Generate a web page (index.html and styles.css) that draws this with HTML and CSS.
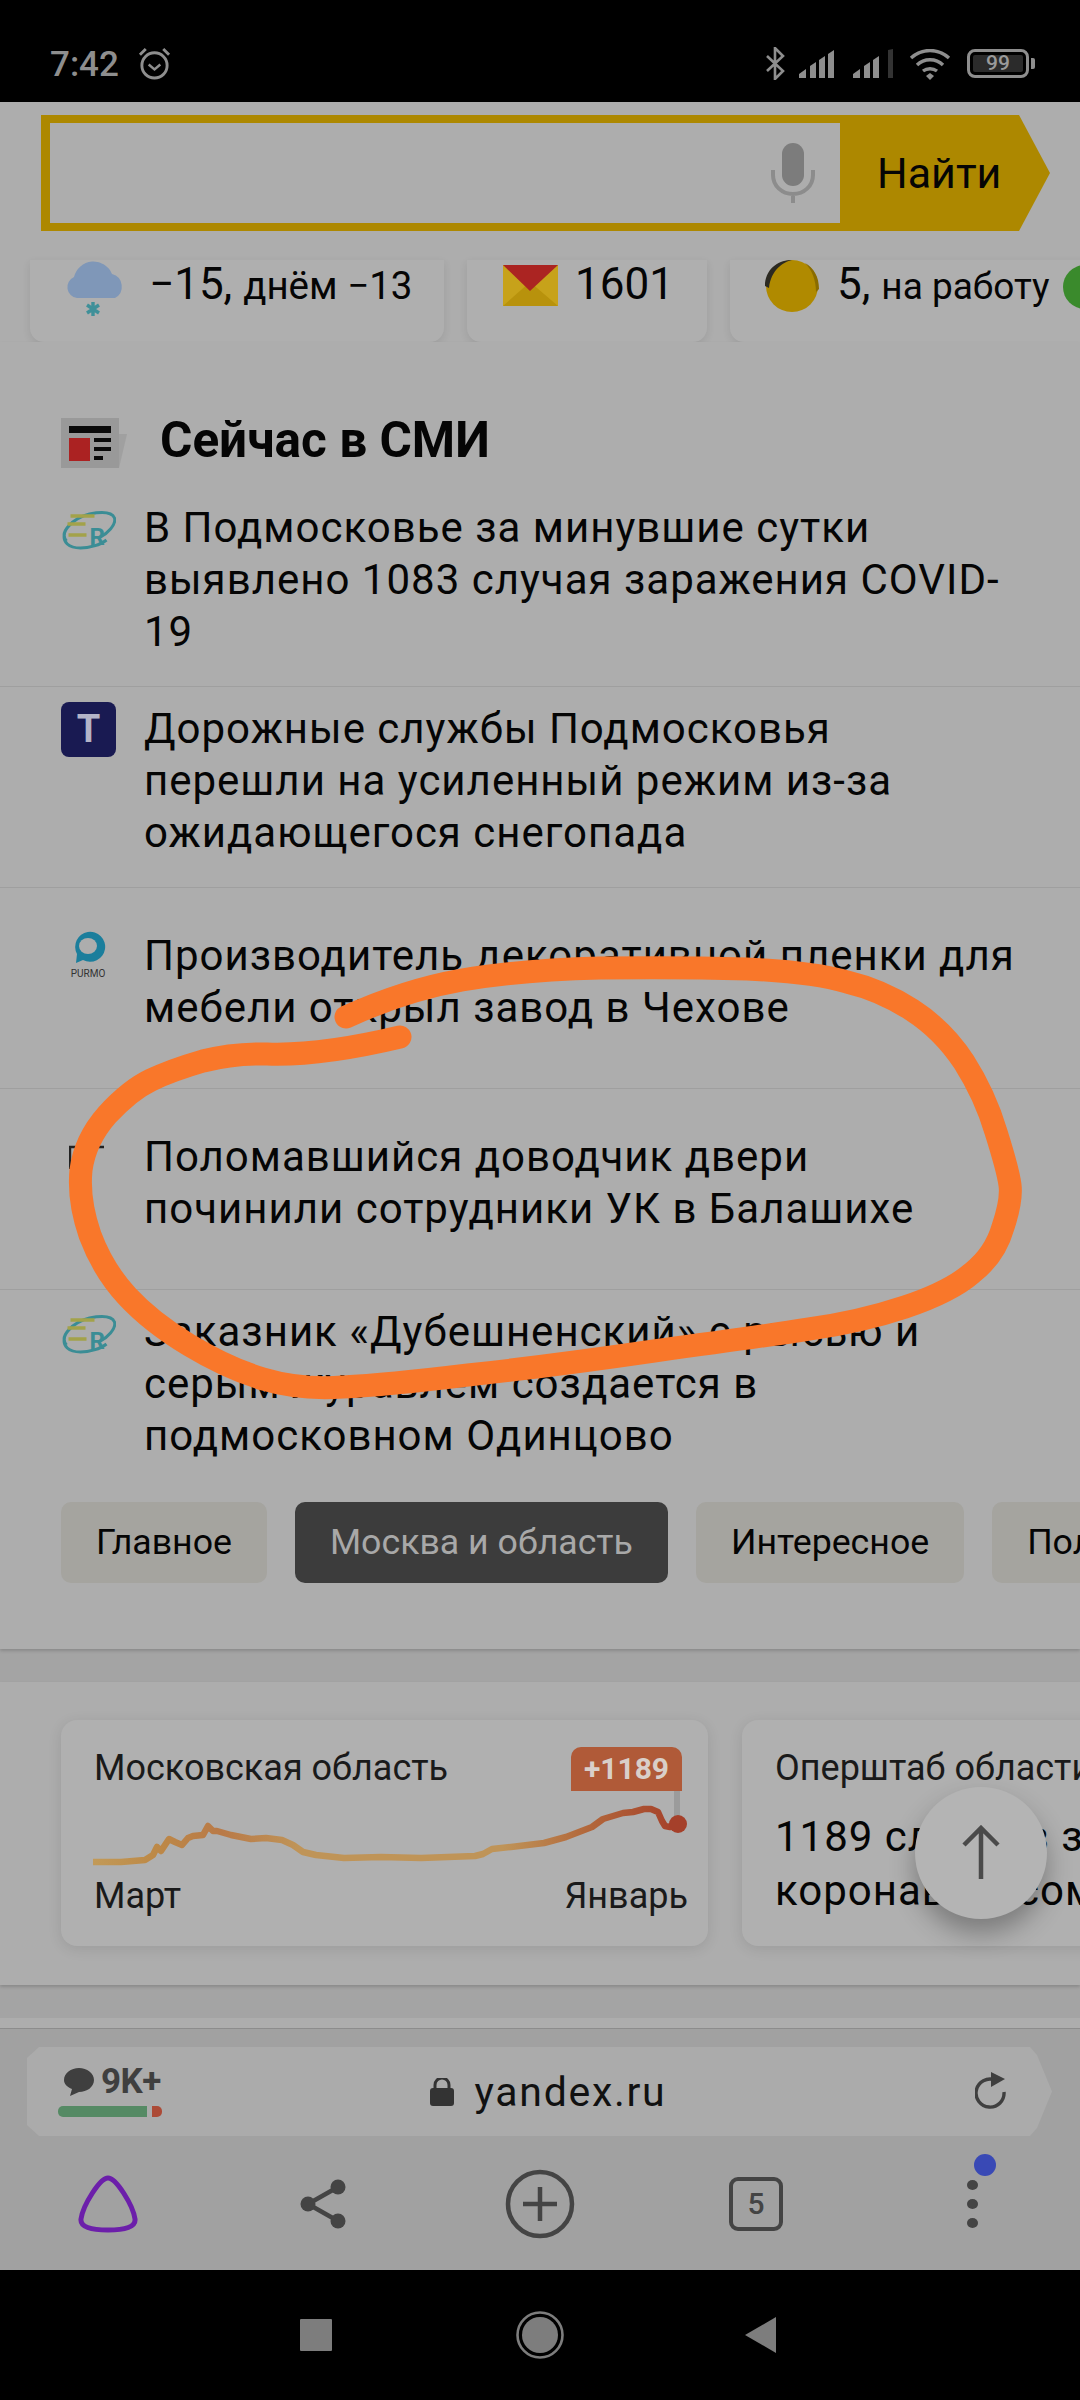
FILE: index.html
```html
<!DOCTYPE html>
<html lang="ru">
<head>
<meta charset="utf-8">
<title>Яндекс</title>
<link rel="stylesheet" href="styles.css">
</head>
<body>
<div class="screen">
  <header class="status">
    <div class="status-left">
      <span class="clock">7:42</span>
      <svg class="ic-alarm" viewBox="0 0 34 34"><circle cx="17" cy="19" r="13" fill="none" stroke="#8e8e8e" stroke-width="3"/><path d="M11 18l6 5 6-5" fill="none" stroke="#8e8e8e" stroke-width="2.5"/><path d="M2 8l6-6M32 8l-6-6" stroke="#8e8e8e" stroke-width="3"/></svg>
    </div>
    <div class="status-right">
      <svg class="ic-bt" viewBox="0 0 20 33"><path d="M2 9l16 15-8 8V1l8 8L2 24" fill="none" stroke="#8e8e8e" stroke-width="2.6"/></svg>
      <svg class="ic-sig" viewBox="0 0 40 29"><path d="M0 29v-4l7-5v9zM11 29V17l6-4v16zM20 29V11l6-4v22zM29 29V5l6-4v28z" fill="#8e8e8e"/></svg>
      <svg class="ic-sig sig2" viewBox="0 0 40 29"><path d="M0 29v-4l7-5v9zM11 29V17l6-4v16zM20 29V11l6-4v22z" fill="#8e8e8e"/><path d="M35 29V1l5-1v29z" fill="#333"/></svg>
      <svg class="ic-wifi" viewBox="0 0 42 32"><path d="M2 9c11-10 27-10 38 0M8 16c7-7 19-7 26 0M14 22c4-3 10-3 14 0" fill="none" stroke="#8e8e8e" stroke-width="3.4"/><path d="M17 27l4-3 4 3-4 4z" fill="#8e8e8e"/></svg>
      <div class="battery"><span class="batt-body"><span class="batt-num">99</span></span><span class="batt-nub"></span></div>
    </div>
  </header>

  <main class="page">
    <div class="top">
      <div class="search">
        <div class="search-field">
          <svg class="ic-mic" viewBox="0 0 44 60"><rect x="11" y="0" width="22" height="43" rx="11" fill="#7c7c7c"/><path d="M2 27v5c0 11 9 19 20 19s20-8 20-19v-5M22 51v9" fill="none" stroke="#8c8c8c" stroke-width="4"/></svg>
        </div>
        <div class="search-btn">Найти</div>
      </div>

      <div class="informers">
        <div class="informer inf-weather">
          <svg class="ic-weather" viewBox="0 0 62 58"><path d="M12 38a11 11 0 0 1-3-21 20 20 0 0 1 38-3 13 13 0 0 1 3 24z" fill="#7f97b8"/><path d="M28 42v14M22 45l12 8M34 45l-12 8" stroke="#3f9099" stroke-width="3.4"/></svg>
          <span>−15, <span class="small">днём −13</span></span>
        </div>
        <div class="informer inf-mail">
          <svg class="ic-mail" viewBox="0 0 55 41"><path d="M0 0h55v41H0z" fill="#c7a21a"/><path d="M0 41l27-24 28 24z" fill="#b8920c"/><path d="M0 0h55L27 26z" fill="#ab2422"/></svg>
          <span>1601</span>
        </div>
        <div class="informer inf-traffic">
          <svg class="ic-coin" viewBox="0 0 58 52"><ellipse cx="29" cy="26" rx="26" ry="26" fill="#b08a00"/><path d="M2 26C2 10 14 0 29 0 20 2 8 10 6 28z" fill="#2c2a22"/><path d="M42 3c9 5 14 14 14 26l-3 3C53 20 49 10 42 3z" fill="#8a6c00"/></svg>
          <span>5, <span class="small tight">на работу</span></span>
          <span class="green-dot"></span>
        </div>
      </div>
    </div>

    <section class="news">
      <h2 class="news-head">
        <svg class="ic-news" viewBox="0 0 66 50"><path d="M0 0h58v50H0z" fill="#999"/><path d="M58 16h8l-8 34z" fill="#a0a0a0"/><path d="M8 8h42v7H8z" fill="#0a0a0a"/><path d="M8 20h21v23H8z" fill="#ab2222"/><path d="M33 20h17v4H33zM33 29h17v4H33zM33 38h9v4h-9z" fill="#0a0a0a"/></svg>
        <span class="news-title">Сейчас в СМИ</span>
      </h2>

      <article class="item">
        <svg class="src src-er" viewBox="0 0 54 40"><path d="M5 31C-3 22 12 8 28 4 38 2 50 1 53 8c2 7-8 16-14 19M3 24c-2 8 4 14 16 14 8 0 20-3 26-8" fill="none" stroke="#3b8d95" stroke-width="3"/><path d="M9 6h24M6 14h18M7 25h18" stroke="#a3a24a" stroke-width="3.6"/><text x="28" y="35" class="er-r">R</text></svg>
        <p>В Подмосковье за минувшие сутки выявлено 1083 случая заражения COVID-19</p>
      </article>
      <article class="item">
        <div class="src src-t"><span>Т</span></div>
        <p>Дорожные службы Подмосковья перешли на усиленный режим из-за ожидающегося снегопада</p>
      </article>
      <article class="item item-mid">
        <div class="src-purmo">
          <svg class="purmo-ring" viewBox="0 0 38 38"><path d="M7 34l1-9a15 15 0 1 1 6 6z" fill="#1b7e9c"/><ellipse cx="19" cy="17" rx="9" ry="8" fill="#adadad"/></svg>
          <span class="purmo-name">PURMO</span>
        </div>
        <p>Производитель декоративной пленки для мебели открыл завод в Чехове</p>
      </article>
      <article class="item item-mid">
        <svg class="src src-pg" viewBox="0 0 36 26"><path d="M1 24V2h14M15 2v22M21 2h14M21 2v22" fill="none" stroke="#222" stroke-width="2.4"/></svg>
        <p>Поломавшийся доводчик двери починили сотрудники УК в Балашихе</p>
      </article>
      <article class="item item-last">
        <svg class="src src-er" viewBox="0 0 54 40"><path d="M5 31C-3 22 12 8 28 4 38 2 50 1 53 8c2 7-8 16-14 19M3 24c-2 8 4 14 16 14 8 0 20-3 26-8" fill="none" stroke="#3b8d95" stroke-width="3"/><path d="M9 6h24M6 14h18M7 25h18" stroke="#a3a24a" stroke-width="3.6"/><text x="28" y="35" class="er-r">R</text></svg>
        <p>Заказник «Дубешненский» с рысью и серым журавлем создается в подмосковном Одинцово</p>
      </article>

      <nav class="tabs">
        <span class="tab">Главное</span>
        <span class="tab tab-on">Москва и область</span>
        <span class="tab">Интересное</span>
        <span class="tab">Политика</span>
      </nav>
    </section>

    <section class="covid">
      <div class="ccard">
        <div class="ccard-top">
          <span>Московская область</span>
          <span class="badge">+1189</span>
        </div>
        <svg class="chart" viewBox="0 0 647 90">
          <defs><linearGradient id="lg" x1="0" x2="1" y1="0" y2="0"><stop offset="0" stop-color="#c29a58"/><stop offset=".1" stop-color="#bd8a48"/><stop offset=".22" stop-color="#b97a48"/><stop offset=".35" stop-color="#bf9458"/><stop offset=".7" stop-color="#bf9458"/><stop offset=".85" stop-color="#b2663a"/><stop offset="1" stop-color="#a5402a"/></linearGradient></defs>
          <path d="M616 0v33" stroke="#9b9b9b" stroke-width="6"/>
          <path d="M32 71L60 71 84 69 92 64 96 56 100 60 108 48 114 51 121 54 127 47 132 45 142 44 147 35 152 40 156 40 170 44 190 48 205 47 221 49 232 54 242 61 255 64 283 67 320 66 360 67 414 65 422 63 431 58 450 56 483 52 505 46 531 36 542 28 552 25 562 22 572 21 583 18 590 18 597 21 601 30 604 35 609 36 613 34 617 33" fill="none" stroke="url(#lg)" stroke-width="6.5" stroke-linejoin="round"/>
          <circle cx="617" cy="33" r="9" fill="#a5402a"/>
        </svg>
        <div class="ccard-bottom"><span>Март</span><span>Январь</span></div>
      </div>
      <div class="ccard ccard2">
        <div class="ccard-top">Оперштаб области</div>
        <p class="ccard-text">1189 случаев заражения<br>коронавирусом</p>
      </div>
    </section>
    <div class="peek"></div>
  </main>

  <footer class="browser">
    <div class="urlbar">
      <div class="comments">
        <div class="comments-top">
          <svg class="ic-bubble" viewBox="0 0 30 28"><path d="M15 0c8 0 15 5 15 12s-7 12-15 12l-9 4 2-7C3 19 0 16 0 12 0 5 7 0 15 0z" fill="#3f3f3f"/></svg>
          <span>9K+</span>
        </div>
        <div class="meter"><span class="meter-g"></span><span class="meter-r"></span></div>
      </div>
      <div class="address">
        <svg class="ic-lock" viewBox="0 0 24 28"><path d="M5 12V7a7 7 0 0 1 14 0v5" fill="none" stroke="#333" stroke-width="3"/><rect x="0" y="10" width="24" height="18" rx="3" fill="#333"/></svg>
        <span>yandex.ru</span>
      </div>
      <svg class="ic-reload" viewBox="0 0 32 40"><path d="M20 8A14 14 0 1 0 29 20" fill="none" stroke="#3f3f3f" stroke-width="3.4"/><path d="M16 0l14 7-14 8z" fill="#3f3f3f"/></svg>
    </div>
    <div class="toolbar">
      <svg class="tb tb-alice" viewBox="0 0 61 58"><path d="M30 3C22 3 5 30 3 44c-1 8 10 11 27 11s28-3 27-11C55 30 38 3 30 3z" fill="none" stroke="#6c1faa" stroke-width="5"/></svg>
      <svg class="tb tb-share" viewBox="0 0 46 50"><path d="M38 8L8 25l30 17" fill="none" stroke="#444" stroke-width="4.5"/><circle cx="38" cy="8" r="7.5" fill="#444"/><circle cx="8" cy="25" r="7.5" fill="#444"/><circle cx="38" cy="42" r="7.5" fill="#444"/></svg>
      <svg class="tb tb-plus" viewBox="0 0 70 70"><circle cx="35" cy="35" r="32" fill="none" stroke="#444" stroke-width="4.5"/><path d="M18 35h34M35 18v34" stroke="#444" stroke-width="4.5"/></svg>
      <div class="tb-tabs">5</div>
      <div class="tb-more">
        <i></i><i></i><i></i>
        <span class="more-dot"></span>
      </div>
    </div>
  </footer>

  <div class="navbar">
    <svg class="nav-sq" viewBox="0 0 32 32"><rect width="32" height="32" rx="1" fill="#7d7d7d"/></svg>
    <svg class="nav-ci" viewBox="0 0 48 48"><circle cx="24" cy="24" r="22.5" fill="none" stroke="#7d7d7d" stroke-width="2.6"/><circle cx="24" cy="24" r="18" fill="#7d7d7d"/></svg>
    <svg class="nav-bk" viewBox="0 0 31 36"><path d="M31 0v36L0 18z" fill="#7d7d7d"/></svg>
  </div>

  <button class="fab" type="button">
    <svg viewBox="0 0 40 56"><path d="M20 54V4M3 20L20 3l17 17" fill="none" stroke="#4a4a4a" stroke-width="4.5"/></svg>
  </button>

  <svg class="scribble" viewBox="0 0 1080 2400">
    <path d="M346 1017Q405 990 462 980Q520 970 600 968Q680 967 747 969Q813 972 847 982Q881 990 912 1010Q943 1030 964 1062Q985 1095 996 1132Q1008 1170 1010 1185Q1012 1200 1003 1227Q995 1255 972 1273Q950 1292 905 1307Q860 1322 809 1329Q758 1337 654 1351Q551 1366 468 1375Q386 1385 343 1387Q300 1390 263 1379Q227 1368 189 1345Q151 1322 127 1296Q103 1270 90 1235Q78 1200 81 1170Q85 1140 107 1115Q130 1090 151 1080Q172 1070 203 1061Q234 1053 267 1054Q320 1056 400 1037" fill="none" stroke="#f9772a" stroke-width="23" stroke-linecap="round" stroke-linejoin="round"/>
  </svg>
</div>
</body>
</html>
```
FILE: styles.css
```css
* { box-sizing: border-box; margin: 0; padding: 0; }
html, body { background: #000; }
body { font-family: Roboto, "Noto Sans", sans-serif; color: #050505; }

.screen {
  position: relative;
  width: 1080px;
  height: 2400px;
  overflow: hidden;
  display: flex;
  flex-direction: column;
  background: #adadad;
}

/* status bar */
.status {
  height: 102px;
  flex: none;
  background: #000;
  display: flex;
  justify-content: space-between;
  padding: 47px 45px 0 50px;
  color: #8e8e8e;
}
.status-left { display: flex; align-items: flex-start; gap: 19px; }
.clock { font-size: 35px; font-weight: 500; line-height: 36px; }
.ic-alarm { width: 33px; height: 33px; }
.status-right { display: flex; align-items: flex-start; }
.ic-bt { width: 20px; height: 33px; }
.ic-sig { width: 40px; height: 29px; margin: 2px 0 0 14px; }
.sig2 { margin-left: 14px; }
.ic-wifi { width: 42px; height: 32px; margin: 2px 0 0 16px; }
.battery { display: flex; align-items: center; margin: 2px 0 0 16px; height: 29px; gap: 2px; }
.batt-body {
  width: 62px; height: 29px;
  border: 3px solid #8e8e8e;
  border-radius: 8px;
  padding: 3px;
  display: block;
}
.batt-num {
  display: block;
  height: 17px;
  background: #2b2b2b;
  border-radius: 2px;
  color: #9a9a9a;
  font-size: 21px;
  font-weight: 500;
  line-height: 17px;
  text-align: center;
}
.batt-nub { width: 4px; height: 11px; background: #8e8e8e; border-radius: 0 2px 2px 0; }

/* page */
.page { flex: 1; min-height: 0; display: flex; flex-direction: column; overflow: hidden; background: #a4a4a4; }
.top { flex: none; background: #adadad; padding-top: 13px; }

.search {
  height: 116px;
  margin-left: 41px;
  width: 1009px;
  display: flex;
  background: #ad8800;
  clip-path: polygon(0 0, 978px 0, 100% 50%, 978px 100%, 0 100%);
  padding: 8px 0 8px 9px;
}
.search-field {
  width: 790px;
  background: #adadad;
  display: flex;
  align-items: center;
  justify-content: flex-end;
  padding-right: 25px;
}
.ic-mic { width: 44px; height: 60px; }
.search-btn {
  flex: 1;
  padding-left: 37px;
  font-size: 43px;
  line-height: 100px;
  color: #050505;
}

.informers {
  height: 82px;
  margin-top: 29px;
  padding-left: 30px;
  display: flex;
  gap: 23px;
}
.informer {
  flex: none;
  background: #afafaf;
  border-radius: 0 0 14px 14px;
  box-shadow: 0 3px 8px rgba(0,0,0,.09);
  display: flex;
  align-items: flex-start;
  font-size: 44px;
  line-height: 48px;
  white-space: nowrap;
}
.informer .small { font-size: 38.5px; }
.informer .tight { font-size: 37px; }
.inf-weather { width: 414px; padding-left: 35px; gap: 22px; }
.inf-mail { width: 240px; padding: 0 0 0 36px; gap: 17px; }
.inf-traffic { width: 500px; padding-left: 33px; gap: 16px; }
.ic-weather { width: 62px; height: 58px; }
.ic-mail { width: 55px; height: 41px; margin-top: 5px; }
.ic-coin { width: 58px; height: 52px; }
.green-dot { width: 44px; height: 44px; border-radius: 50%; background: #3a8a2c; margin: 5px 0 0 -3px; }

/* news */
.news {
  flex: none;
  height: 1307px;
  padding-top: 76px;
  background: #adadad;
  box-shadow: 0 2px 3px rgba(0,0,0,.16);
}
.news-head {
  display: flex;
  align-items: center;
  height: 50px;
  margin-bottom: 18px;
  padding-left: 61px;
  font-size: 49.5px;
  font-weight: 700;
  line-height: 50px;
}
.news-title { padding-bottom: 6px; }
.ic-news { width: 66px; height: 50px; margin-right: 33px; }

.item {
  height: 201px;
  padding: 16px 61px 0 144px;
  position: relative;
  border-bottom: 1px solid #9f9f9f;
  font-size: 42px;
  line-height: 52px;
}
.item-mid { padding-top: 42px; }
.item-last { border-bottom: 0; height: 212px; }
.item p { letter-spacing: 1px; }
.src { position: absolute; left: 61px; }
.src-er { top: 24px; width: 55px; height: 40px; }
.er-r { font: 700 24px Roboto, sans-serif; fill: #3b8d95; }
.src-t {
  top: 15px; width: 55px; height: 55px;
  background: #191a52;
  border-radius: 8px;
  color: #b4b4c8;
  font-size: 38px;
  font-weight: 700;
  line-height: 55px;
  text-align: center;
}
.src-purmo {
  position: absolute;
  left: 61px; top: 40px;
  width: 54px;
  display: flex;
  flex-direction: column;
  align-items: center;
}
.purmo-ring { width: 38px; height: 40px; }
.purmo-name { font-size: 10px; line-height: 12px; color: #333; }
.src-pg { left: 69px; top: 56px; width: 36px; height: 26px; }

.tabs {
  display: flex;
  gap: 28px;
  padding-left: 61px;
  white-space: nowrap;
}
.tab {
  flex: none;
  height: 81px;
  padding: 0 35px;
  border-radius: 10px;
  background: #a5a49f;
  font-size: 35.7px;
  line-height: 81px;
}
.tab-on { background: #3c3c3c; color: #a8a8a8; }

/* covid cards */
.covid {
  flex: none;
  height: 303px;
  margin-top: 33px;
  padding: 38px 0 0 61px;
  display: flex;
  gap: 34px;
  background: #adadad;
  box-shadow: 0 2px 3px rgba(0,0,0,.16);
}
.ccard {
  flex: none;
  width: 647px;
  height: 226px;
  background: #b0b0b0;
  border-radius: 16px;
  box-shadow: 0 3px 14px rgba(0,0,0,.1);
  padding: 26px 0 0 33px;
  position: relative;
  font-size: 36px;
  color: #1a1a1a;
}
.ccard-top { display: flex; justify-content: space-between; line-height: 44px; padding-right: 26px; white-space: nowrap; }
.badge {
  width: 111px;
  height: 44px;
  margin-top: 1px;
  background: #b05a38;
  border-radius: 10px 10px 0 0;
  color: #d9cfc9;
  font-weight: 700;
  font-size: 30px;
  line-height: 44px;
  text-align: center;
}
.chart { position: absolute; left: 0; top: 71px; width: 647px; height: 90px; }
.ccard-bottom { position: absolute; left: 33px; right: 20px; top: 154px; display: flex; justify-content: space-between; line-height: 44px; }
.ccard2 { width: 640px; }
.ccard-text { font-size: 42px; line-height: 54px; letter-spacing: 1px; white-space: nowrap; margin-top: 20px; color: #050505; }

.peek { flex: none; height: 12px; margin-top: 33px; background: #adadad; }

/* browser bars */
.browser {
  flex: none;
  height: 242px;
  background: #a1a1a1;
  border-top: 1px solid #8c8c8c;
  padding-top: 18px;
}
.urlbar {
  width: 1025px;
  height: 89px;
  margin-left: 27px;
  background: #ababab;
  clip-path: polygon(12px 0, 1003px 0, 1010px 8px, 100% 50%, 1010px 81px, 1003px 100%, 12px 100%, 0 78px, 0 11px);
  display: flex;
  align-items: center;
  padding: 0 45px 0 37px;
}
.comments { width: 102px; }
.comments-top { display: flex; gap: 7px; align-items: center; font-size: 35px; font-weight: 700; color: #3f3f3f; line-height: 30px; letter-spacing: -.5px; }
.ic-bubble { width: 30px; height: 28px; }
.meter { display: flex; gap: 5px; margin-top: 9px; height: 11px; margin-left: -6px; }
.meter-g { width: 89px; background: #558a64; border-radius: 5px 0 0 5px; }
.meter-r { width: 10px; background: #ac4a36; border-radius: 0 5px 5px 0; }
.address {
  flex: 1;
  display: flex;
  align-items: center;
  justify-content: center;
  gap: 21px;
  font-size: 41px;
  line-height: 50px;
  letter-spacing: 1.7px;
  color: #111;
  padding-right: 45px;
}
.ic-lock { width: 24px; height: 28px; }
.ic-reload { width: 32px; height: 40px; }

.toolbar {
  height: 109px;
  margin-top: 13px;
  padding: 0 88px 0 78px;
  display: flex;
  align-items: center;
}
.tb { flex: none; }
.tb-alice { width: 61px; height: 58px; }
.tb-share { width: 46px; height: 50px; margin-left: 161px; }
.tb-plus { width: 70px; height: 70px; margin-left: 159px; }
.tb-tabs {
  width: 54px; height: 54px;
  margin-left: 154px;
  border: 4.5px solid #444;
  border-radius: 9px;
  color: #444;
  font-size: 30px;
  font-weight: 500;
  line-height: 45px;
  text-align: center;
}
.tb-more { width: 11px; margin-left: 184px; display: flex; flex-direction: column; gap: 9px; position: relative; }
.tb-more i { display: block; width: 11px; height: 10px; background: #444; border-radius: 50%; }
.more-dot { position: absolute; left: 7px; top: -26px; width: 22px; height: 22px; background: #3949b5; border-radius: 50%; }

.navbar {
  flex: none;
  height: 130px;
  background: #000;
  display: flex;
  align-items: center;
  padding: 0 0 0 300px;
}
.nav-sq { width: 32px; height: 32px; }
.nav-ci { width: 48px; height: 48px; margin-left: 184px; }
.nav-bk { width: 31px; height: 36px; margin-left: 181px; }

/* floating overlays */
.fab {
  position: absolute;
  left: 915px; top: 1787px;
  width: 132px; height: 132px;
  border: 0;
  border-radius: 50%;
  background: #b4b4b4;
  box-shadow: 0 14px 26px rgba(0,0,0,.3);
  display: flex;
  align-items: center;
  justify-content: center;
}
.fab svg { width: 40px; height: 56px; }
.scribble { position: absolute; left: 0; top: 0; width: 1080px; height: 2400px; pointer-events: none; }
```
